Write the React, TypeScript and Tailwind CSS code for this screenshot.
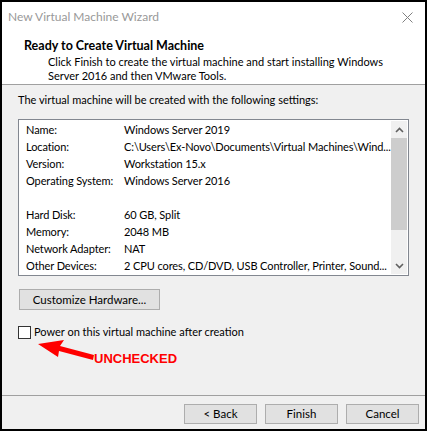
import React from "react";

const rows: [string, string][] = [
  ["Name:", "Windows Server 2019"],
  ["Location:", "C:\\Users\\Ex-Novo\\Documents\\Virtual Machines\\Wind..."],
  ["Version:", "Workstation 15.x"],
  ["Operating System:", "Windows Server 2016"],
  ["", ""],
  ["Hard Disk:", "60 GB, Split"],
  ["Memory:", "2048 MB"],
  ["Network Adapter:", "NAT"],
  ["Other Devices:", "2 CPU cores, CD/DVD, USB Controller, Printer, Sound..."],
];

const WinButton: React.FC<{ label: string; className?: string }> = ({ label, className }) => (
  <button
    className={
      "h-[20px] w-[73px] bg-[#e1e1e1] border border-[#adadad] text-[11.5px] leading-none text-black flex items-center justify-center " +
      (className ?? "")
    }
  >
    {label}
  </button>
);

const App: React.FC = () => {
  return (
    <div className="w-[427px] h-[431px] border-2 border-black bg-[#f0f0f0] flex flex-col relative font-['Segoe_UI','Lato',sans-serif] text-[11px] text-black overflow-hidden">
      {/* Header */}
      <div className="bg-white h-[83px] border-b border-[#a0a0a0] shrink-0">
        <div className="h-[30px] flex items-center justify-between pl-[6px] pr-[10px]">
          <span className="text-[#999999] text-[12px]">New Virtual Machine Wizard</span>
          <svg width="11" height="11" viewBox="0 0 11 11" className="mr-[2px]">
            <path d="M0.5 0.5 L10.5 10.5 M10.5 0.5 L0.5 10.5" stroke="#808080" strokeWidth="1" />
          </svg>
        </div>
        <div className="pl-[22px] pt-[6px] font-bold text-[12.5px] leading-[16px]">Ready to Create Virtual Machine</div>
        <div className="pl-[46px] leading-[14px] pt-[1px] whitespace-nowrap">
          Click Finish to create the virtual machine and start installing Windows
          <br />
          Server 2016 and then VMware Tools.
        </div>
      </div>

      {/* Body */}
      <div className="flex-1 px-[16px] pt-[8px] flex flex-col">
        <div className="leading-[14px]">The virtual machine will be created with the following settings:</div>

        <div className="mt-[12px] h-[157px] border border-[#828790] bg-white flex">
          <div className="flex-1 min-w-0 pt-[2px] pl-[7px] tracking-[-0.1px]">
            {rows.map(([k, v], i) => (
              <div key={i} className="h-[17px] flex items-center whitespace-nowrap">
                <span className="w-[98px] shrink-0">{k}</span>
                <span>{v}</span>
              </div>
            ))}
          </div>
          <div className="w-[16px] my-[1px] mr-[1px] bg-[#f0f0f0] flex flex-col items-center">
            <div className="h-[17px] flex items-center justify-center">
              <svg width="9" height="6" viewBox="0 0 9 6">
                <path d="M1 5 L4.5 1.5 L8 5" stroke="#606060" strokeWidth="1.6" fill="none" />
              </svg>
            </div>
            <div className="w-full flex-1 bg-[#cdcdcd] mb-[27px]" />
            <div className="h-[17px] flex items-center justify-center">
              <svg width="9" height="6" viewBox="0 0 9 6">
                <path d="M1 1 L4.5 4.5 L8 1" stroke="#606060" strokeWidth="1.6" fill="none" />
              </svg>
            </div>
          </div>
        </div>

        <div className="mt-[13px] ml-[1px]">
          <button className="h-[21px] w-[141px] bg-[#e1e1e1] border border-[#adadad] flex items-center justify-center text-[11.5px]">
            Customize Hardware...
          </button>
        </div>

        <label className="mt-[14px] flex items-center gap-[3px]">
          <span className="w-[13px] h-[13px] border border-[#333333] bg-white shrink-0" />
          <span>Power on this virtual machine after creation</span>
        </label>

        <div className="pl-[76px] mt-[11px] font-['Liberation_Sans',sans-serif] font-bold text-[13px] leading-none text-[#ff0000]">
          UNCHECKED
        </div>
      </div>

      {/* Annotation arrow */}
      <svg className="absolute left-[32px] top-[336px]" width="64" height="24" viewBox="0 0 64 24">
        <polygon points="4,6 30,2 26,8 60,17 59,22 25,13 24,19" fill="#ff0000" />
      </svg>

      {/* Footer */}
      <div className="h-[34px] shrink-0 border-t border-[#a0a0a0] flex items-start justify-end gap-[8px] pr-[6px] pt-[8px]">
        <WinButton label="< Back" />
        <WinButton label="Finish" />
        <WinButton label="Cancel" />
      </div>
    </div>
  );
};

export default App;
